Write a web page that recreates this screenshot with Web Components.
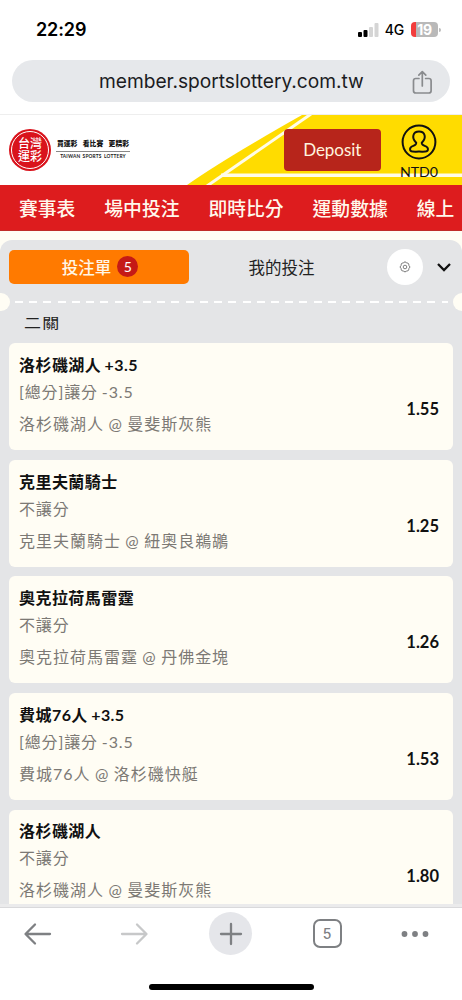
<!DOCTYPE html>
<html lang="zh-Hant">
<head>
<meta charset="utf-8">
<title>台灣運彩</title>
<style>
html,body{margin:0;padding:0}
body{width:462px;height:1000px;overflow:hidden;background:#fff;font-family:Lato,"Noto Sans CJK TC",sans-serif;color:#111}
</style>
</head>
<body>
<app-screen></app-screen>
<script>
const define = (name, html, setup) => customElements.define(name, class extends HTMLElement {
  constructor() {
    super();
    const t = document.createElement('template');
    t.innerHTML = '<style>*{box-sizing:border-box}:host{display:block;box-sizing:border-box}</style>' + html;
    this.attachShadow({ mode: 'open' }).append(t.content.cloneNode(true));
    if (setup) setup(this.shadowRoot);
  }
});

define('status-bar', `<style>
:host{display:flex;height:60px;padding:0 22px 1px 36px;align-items:center;font-family:Inter,sans-serif;color:#000}
.time{font-size:18px;font-weight:600;letter-spacing:-.1px;flex:1}
.net{font-size:14px;font-weight:500;margin:0 7px 0 6px;letter-spacing:-.2px}
.bat{width:27px;height:15px;border-radius:4px;background:linear-gradient(90deg,#f23d3d 5px,#b9b9b9 5px);color:#fff;font-size:14px;font-weight:700;line-height:15px;text-align:center;letter-spacing:-.3px}
.cap{width:2px;height:4px;background:#bbb;border-radius:0 2px 2px 0;margin-left:1px;margin-right:-1px}
svg{display:block}
</style>
<span class="time">22:29</span>
<svg width="21" height="14"><rect y="9" width="4" height="5" rx="1"/><rect x="5.5" y="7" width="4" height="7" rx="1"/><rect x="11" y="4" width="4" height="10" rx="1" fill="#d5d5d5"/><rect x="16.5" y="0" width="4" height="14" rx="1" fill="#d5d5d5"/></svg>
<span class="net">4G</span><span class="bat">19</span><span class="cap"></span>`);

define('address-bar', `<style>
:host{display:grid;grid-template-columns:1fr 264px 1fr;align-items:center;height:42px;margin:0 12px 12px;background:#e6e8eb;border-radius:21px;font-family:Inter,sans-serif}
span{grid-column:2;font-size:19.2px;color:#1b1c1f;white-space:nowrap;letter-spacing:-.04px;text-align:center}
svg{justify-self:end;margin-right:17px;margin-top:2px}
</style><span><slot></slot></span>
<svg width="21" height="25" fill="none" stroke="#898b8e" stroke-width="1.7" stroke-linecap="round" stroke-linejoin="round"><path d="M7 8.5H3.8Q1.5 8.5 1.5 10.8V20.7Q1.5 23 3.8 23H16.8Q19.1 23 19.1 20.7V10.8Q19.1 8.5 16.8 8.5H13.6M10.3 16V2M6.8 5.2L10.3 1.7L13.8 5.2"/></svg>`);

define('brand-logo', `<style>
:host{display:flex;gap:5px;align-items:flex-start}
.seal{width:42px;height:42px;border-radius:50%;background:#d9131c;padding:2px;display:flex}
.ring{flex:1;border:1px solid #fff;border-radius:50%;display:grid;place-content:center;row-gap:.5px;color:#fff;text-align:center}
.ring span{display:block;height:12.5px;font:500 12px/12.5px "Noto Sans CJK TC",sans-serif}
.words{width:74px;padding-top:9px;text-align:center;white-space:nowrap}
.zh{display:flex;justify-content:space-between;font:900 6.8px/11px "Noto Sans CJK TC",sans-serif;color:#111;border-bottom:1px solid #888;padding:0 1px 1px;height:14px}
.en{font:700 4.8px/7px Lato,sans-serif;color:#222;margin-top:1px;letter-spacing:.18px;word-spacing:.9px}
</style><div class="seal"><div class="ring"><span>台灣</span><span>運彩</span></div></div>
<div class="words"><div class="zh"><span>買運彩</span><span>看比賽</span><span>更精彩</span></div><div class="en">TAIWAN SPORTS LOTTERY</div></div>`);

define('site-header', `<style>
:host{display:grid;grid-template-columns:1fr 97.500px 42px;column-gap:17px;height:71px;padding:0 22px 0 9px;border-top:1px solid #eee;position:relative;overflow:hidden}
.bg{position:absolute;inset:0}
brand-logo{position:relative;margin-top:14px}
.dep{position:relative;margin-top:14px;height:41.500px;border-radius:4px;background:#b7251b;color:#fff4df;display:grid;place-items:center;font-size:17px;letter-spacing:-.05px}
.user{position:relative;margin-top:9px;display:flex;flex-direction:column;align-items:center;font-size:14.2px;line-height:18px;color:#111}
.user svg{display:block}
.user span{margin-top:2.500px;white-space:nowrap}
</style>
<svg class="bg" width="462" height="70" viewBox="0 115 462 70"><path d="M187 185Q224 159 302 115H462V185Z" fill="#ffdc00"/><path d="M207 186L311 114" stroke="#fffce8" stroke-width="3" fill="none"/><path d="M221 175.3H462" stroke="#fffce8" stroke-width="3.4"/></svg>
<brand-logo></brand-logo><div class="dep">Deposit</div>
<div class="user"><svg width="37" height="36" viewBox="0 0 37 36" fill="none" stroke="#111" stroke-width="2"><circle cx="18" cy="18" r="16.4"/><path d="M15.2 18.7C10 13.5 12.1 7.6 18 7.600S26 13.500 20.800 18.700C20.600 20.500 21.300 21 23.700 21.900C26.700 23 27.300 24.500 26.800 26.200C26.200 28.200 23.200 27.600 18 27.600S9.800 28.200 9.200 26.200C8.700 24.500 9.300 23 12.300 21.900C14.700 21 15.400 20.500 15.200 18.700Z"/></svg><span>NTD0</span></div>`);

define('site-nav', `<style>
:host{display:flex;gap:29px;height:46px;padding-left:19px;background:#dd1c1e;overflow:hidden;align-items:center;color:#fff8ec;border-bottom:1px solid #c02c28;font:500 18.8px/28px "Noto Sans CJK TC",sans-serif;white-space:nowrap}
span{flex:none}
</style><span>賽事表</span><span>場中投注</span><span>即時比分</span><span>運動數據</span><span>線上</span>`);

define('slip-tabs', `<style>
:host{display:grid;grid-template-columns:180px 1fr 36px 30px;align-items:center;align-content:start;padding:8.500px 9px 0;height:53px}
.tab{height:34px;display:flex;align-items:center;justify-content:center;font-size:16.5px}
.on{background:#ff7a00;color:#fff6e6;border-radius:5px;gap:6px;font-weight:500;padding-left:2px}
b{width:21px;height:21px;border-radius:50%;background:#c51a16;display:grid;place-items:center;font:400 14px/21px Lato,sans-serif;color:#fff}
.off{color:#222;padding-right:13px}
.gear{width:36px;height:36px;border-radius:50%;background:#fff;display:grid;place-items:center}
.arrow{margin-left:12px}
</style><div class="tab on"><span>投注單</span><b>5</b></div><div class="tab off">我的投注</div>
<div class="gear"><svg width="12" height="12" viewBox="0 0 12 12" fill="none" stroke="#555" stroke-width=".75"><path d="M5 1.200L6 .900L7 1.200L7.500 2L8.900 2L9.800 3.200L9.600 4.300L10.700 5.100V6.900L9.600 7.700L9.800 8.900L8.900 9.900L7.500 9.900L7 10.700H5L4.500 9.900L3.100 9.900L2.200 8.900L2.400 7.700L1.300 6.900V5.100L2.400 4.300L2.200 3.200L3.100 2L4.500 2Z"/><circle cx="6" cy="6" r="1.800"/></svg></div>
<svg class="arrow" width="18" height="12" fill="none" stroke="#111" stroke-width="2.300"><path d="M3 3L9 9L15 3"/></svg>`);

define('tear-line', `<style>
:host{display:flex;align-items:center;justify-content:space-between;height:18px;margin:0 -8.500px}
i{width:18px;height:18px;border-radius:50%;background:#fffdf4}
div{flex:1;height:2.5px;margin:0 5px;background:repeating-linear-gradient(90deg,#fff 0 8px,transparent 8px 14.220px)}
</style><i></i><div></div><i></i>`);

define('bet-card', `<style>
:host{display:grid;grid-template-columns:1fr auto;height:107px;padding:7.700px 13.500px 0 10px;background:#fffdf4;border-radius:6px;white-space:nowrap}
.title{font-size:16px;font-weight:700;line-height:27px;letter-spacing:.45px;word-spacing:-1px;color:#111}
.line{font-size:16px;line-height:28px;letter-spacing:.98px;word-spacing:-.6px;color:#7c7974}
.type{letter-spacing:.85px;word-spacing:-1px}
.match{line-height:36px}
.odds{align-self:center;font-size:16.5px;font-weight:700;color:#111;padding-top:17px}
</style><div><div class="title"><slot></slot></div><div class="line type"><slot name="type"></slot></div><div class="line match"><slot name="match"></slot></div></div>
<div class="odds"><slot name="odds"></slot></div>`);

define('bet-slip', `<style>
:host{height:664px;background:#e4e5e7;border-radius:12px 12px 0 0;overflow:hidden}
h2{margin:0 0 0 24px;padding-top:1.500px;font-size:17px;line-height:20px;font-weight:400;color:#222;height:32.300px;letter-spacing:1.200px}
h2 span{display:inline-block;transform:scaleY(.82)}
.cards{display:flex;flex-direction:column;gap:9.600px;padding:0 9.500px 0 9px}
</style><slip-tabs></slip-tabs><tear-line></tear-line><h2><span>二關</span></h2><div class="cards"></div>`, root => {
  const bets = [
    ['洛杉磯湖人 +3.5', '[總分]讓分 -3.5', '洛杉磯湖人 @ 曼斐斯灰熊', '1.55'],
    ['克里夫蘭騎士', '不讓分', '克里夫蘭騎士 @ 紐奧良鵜鶘', '1.25'],
    ['奧克拉荷馬雷霆', '不讓分', '奧克拉荷馬雷霆 @ 丹佛金塊', '1.26'],
    ['費城76人 +3.5', '[總分]讓分 -3.5', '費城76人 @ 洛杉磯快艇', '1.53'],
    ['洛杉磯湖人', '不讓分', '洛杉磯湖人 @ 曼斐斯灰熊', '1.80']
  ];
  root.querySelector('.cards').innerHTML = bets.map(([t, k, m, o]) =>
    `<bet-card>${t}<span slot="type">${k}</span><span slot="match">${m}</span><span slot="odds">${o}</span></bet-card>`).join('');
});

define('browser-toolbar', `<style>
:host{height:96px;border-top:3px solid #ebebec;background:#fff}
nav{display:flex;gap:36.500px;align-items:flex-start;height:59px;padding:4px 0 0 7.500px;border-top:1px solid #d9d9db}
nav>div{width:60px;height:43px;flex:none;display:grid;place-items:center}
nav>div:last-child{margin-left:-9px}
svg{display:block;fill:none;stroke:#7e8083;stroke-linecap:round;stroke-linejoin:round;stroke-width:2.300}
.plus{width:43px;height:43px;border-radius:50%;background:#e5e6ea;display:grid;place-items:center}
.tabs{width:29px;height:29px;border:2px solid #7e8083;border-radius:7px;display:grid;place-items:center;font:500 14px/20px Inter,sans-serif;color:#7e8083}
.home{width:165px;height:6px;border-radius:3px;background:#000;margin:18px auto 0}
</style><nav>
<div><svg width="30" height="24"><path d="M27 12H3M12 2.500L2.500 12L12 21.500"/></svg></div>
<div><svg width="30" height="24" style="stroke:#c7c8c9"><path d="M3 12H27M18 2.500L27.500 12L18 21.500"/></svg></div>
<div><span class="plus"><svg width="24" height="24"><path d="M12 2V22M2 12H22"/></svg></span></div>
<div><span class="tabs">5</span></div>
<div><svg width="28" height="8" style="fill:#7e8083;stroke:none"><circle cx="3.500" cy="4" r="2.900"/><circle cx="14" cy="4" r="2.900"/><circle cx="24.500" cy="4" r="2.900"/></svg></div>
</nav><div class="home"></div>`);

define('app-screen', `<style>
:host{width:462px;height:1000px;background:#fff;overflow:hidden}
.page{background:#fffdf4;padding-top:9px}
</style><status-bar></status-bar><address-bar>member.sportslottery.com.tw</address-bar>
<site-header></site-header><site-nav></site-nav><div class="page"><bet-slip></bet-slip></div><browser-toolbar></browser-toolbar>`);
</script>
</body>
</html>
